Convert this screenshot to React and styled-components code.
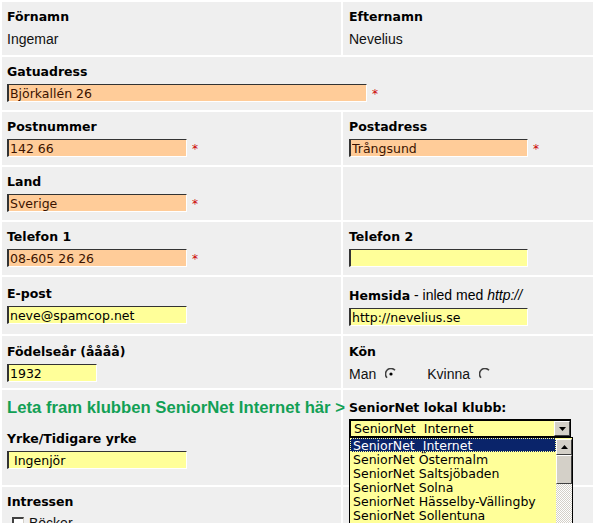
import React from 'react';
import styled, { createGlobalStyle } from 'styled-components';

const GlobalStyle = createGlobalStyle`
  body {
    margin: 0;
    background: #fff;
    font-family: "DejaVu Sans", Verdana, sans-serif;
  }
`;

const Form = styled.div`
  display: grid;
  grid-template-columns: 339px 250px;
  gap: 2px;
  padding: 2px;
  width: 595px;
  box-sizing: border-box;
  background: #fff;
`;

const Cell = styled.div`
  background: #efefef;
  height: ${({ h }) => h || 53}px;
  padding: ${({ pt }) => pt || 5}px 5px 0 ${({ right }) => (right ? 6 : 5)}px;
  box-sizing: border-box;
  grid-column: ${({ span }) => (span ? '1 / -1' : 'auto')};
  overflow: visible;
`;

const Label = styled.div`
  font: bold 12.5px "DejaVu Sans", Verdana, sans-serif;
  line-height: 20px;
  color: #000;
  white-space: nowrap;
  margin-top: ${({ mt }) => mt || 0}px;
`;

const Hint = styled.span`
  font: 14px "Liberation Sans", Arial, sans-serif;
  font-weight: normal;
  font-style: ${({ italic }) => (italic ? 'italic' : 'normal')};
`;

const Value = styled.div`
  font: 14px "Liberation Sans", Arial, sans-serif;
  line-height: 20px;
  margin-top: 2px;
  color: #111;
`;

const Field = styled.div`
  display: flex;
  align-items: center;
  margin-top: ${({ mt }) => (mt === undefined ? 2 : mt)}px;
  height: 18px;
`;

const TextBox = styled.input`
  width: ${({ w }) => w}px;
  height: 18px;
  box-sizing: border-box;
  margin: 0;
  padding: 0 0 0 1px;
  background: ${({ req }) => (req ? '#ffcc99' : '#ffff99')};
  border-style: solid;
  border-width: 1px 1px 1px 2px;
  border-color: #333 #fff #fff #333;
  font: 12.5px "DejaVu Sans", Verdana, sans-serif;
  color: ${({ req }) => (req ? '#3b1300' : '#000')};
  outline: none;
`;

const Star = styled.span`
  color: #c00;
  font: 12px "DejaVu Sans", Verdana, sans-serif;
  line-height: 18px;
  margin: 2px 0 0 5px;
`;

const Green = styled.div`
  font: bold 16.7px "Liberation Sans", Arial, sans-serif;
  line-height: 20px;
  color: #12a055;
  white-space: nowrap;
  position: relative;
  z-index: 1;
`;

const RadioRow = styled.div`
  display: flex;
  align-items: center;
  margin-top: 2px;
  height: 20px;
  font: 14px "Liberation Sans", Arial, sans-serif;
  color: #111;
`;

const RadioItem = styled.label`
  display: flex;
  align-items: center;
  gap: 9px;
  margin-right: 30px;
`;

const SelectWrap = styled.div`
  position: relative;
  width: 222px;
  margin-top: 1px;
`;

const SelectBox = styled.div`
  height: 18px;
  box-sizing: border-box;
  border: 1px solid #000;
  border-top-width: 2px;
  border-left-width: 2px;
  background: #ffff99;
  display: flex;
  align-items: center;
  justify-content: space-between;
  padding-left: 3px;
  font: 12.5px "DejaVu Sans", Verdana, sans-serif;
  white-space: pre;
  color: #000;
`;

const ArrowBtn = styled.div`
  width: 16px;
  height: 15px;
  box-sizing: border-box;
  background: #d4d0c8;
  border: 1px solid;
  border-color: #fff #404040 #404040 #fff;
  display: flex;
  align-items: center;
  justify-content: center;
`;

const DropList = styled.div`
  position: absolute;
  top: 100%;
  left: 0;
  width: 224px;
  height: 100px;
  box-sizing: border-box;
  border: 1px solid #000;
  background: #ffff99;
  display: flex;
  z-index: 2;
`;

const Options = styled.div`
  flex: 1;
`;

const Option = styled.div`
  height: 14px;
  font: 12.5px/16px "DejaVu Sans", Verdana, sans-serif;
  white-space: pre;
  padding-left: 3px;
  background: ${({ selected }) => (selected ? '#0a246a' : 'transparent')};
  color: ${({ selected }) => (selected ? '#fff' : '#000')};
  outline: ${({ selected }) => (selected ? '1px dotted #ffff99' : 'none')};
  outline-offset: -1px;
`;

const ScrollBar = styled.div`
  width: 16px;
  margin-top: 1px;
  display: flex;
  flex-direction: column;
  background: repeating-conic-gradient(#d4d0c8 0 25%, #fff 0 50%) 0 0 / 2px 2px;
`;

const ScrollBtn = styled.div`
  height: 16px;
  box-sizing: border-box;
  background: #d4d0c8;
  border: 1px solid;
  border-color: #fff #404040 #404040 #fff;
  display: flex;
  align-items: center;
  justify-content: center;
`;

const Thumb = styled.div`
  height: 29px;
  box-sizing: border-box;
  background: #d4d0c8;
  border: 1px solid;
  border-color: #fff #404040 #404040 #fff;
`;

const CheckRow = styled.div`
  display: flex;
  align-items: center;
  gap: 5px;
  margin: 3px 0 0 5px;
  font: 14px "Liberation Sans", Arial, sans-serif;
  color: #111;
`;

const CheckBox = styled.span`
  width: 12px;
  height: 12px;
  box-sizing: border-box;
  background: #fff;
  border-style: solid;
  border-width: 2px 1px 1px 2px;
  border-color: #404040 #d4d0c8 #d4d0c8 #404040;
`;

const Radio = ({ checked }) => (
  <svg width="12" height="12" viewBox="0 0 12 12">
    <path d="M10 2.2 A5 5 0 0 0 2 9.8" fill="none" stroke="#404040" strokeWidth="1.6" />
    {checked && <circle cx="6" cy="6" r="1.6" fill="#000" />}
  </svg>
);

const Arrow = ({ up }) => (
  <svg width="7" height="4" viewBox="0 0 7 4">
    <path d={up ? 'M0 4 L3.5 0 L7 4 Z' : 'M0 0 L7 0 L3.5 4 Z'} fill="#000" />
  </svg>
);

const clubs = [
  'SeniorNet  Internet',
  'SeniorNet Östermalm',
  'SeniorNet Saltsjöbaden',
  'SeniorNet Solna',
  'SeniorNet Hässelby-Vällingby',
  'SeniorNet Sollentuna',
];

const Input = ({ w, req, value }) => (
  <Field>
    <TextBox w={w} req={req} value={value} readOnly />
    {req && <Star>*</Star>}
  </Field>
);

const App = () => (
  <>
    <GlobalStyle />
    <Form>
      <Cell>
        <Label>Förnamn</Label>
        <Value>Ingemar</Value>
      </Cell>
      <Cell right>
        <Label>Efternamn</Label>
        <Value>Nevelius</Value>
      </Cell>

      <Cell span>
        <Label>Gatuadress</Label>
        <Input w={360} req value="Björkallén 26" />
      </Cell>

      <Cell>
        <Label>Postnummer</Label>
        <Input w={180} req value="142 66" />
      </Cell>
      <Cell right>
        <Label>Postadress</Label>
        <Input w={179} req value="Trångsund" />
      </Cell>

      <Cell>
        <Label>Land</Label>
        <Input w={180} req value="Sverige" />
      </Cell>
      <Cell right />

      <Cell>
        <Label>Telefon 1</Label>
        <Input w={180} req value="08-605 26 26" />
      </Cell>
      <Cell right>
        <Label>Telefon 2</Label>
        <Input w={179} value="" />
      </Cell>

      <Cell h={57} pt={7}>
        <Label>E-post</Label>
        <Input w={180} value="neve@spamcop.net" />
      </Cell>
      <Cell h={57} pt={9} right>
        <Label>
          Hemsida<Hint> - inled med </Hint>
          <Hint italic>http://</Hint>
        </Label>
        <Input w={179} value="http://nevelius.se" />
      </Cell>

      <Cell h={52} pt={6}>
        <Label>Födelseår (åååå)</Label>
        <Input w={90} value="1932" />
      </Cell>
      <Cell h={52} pt={6} right>
        <Label>Kön</Label>
        <RadioRow>
          <RadioItem>
            Man <Radio checked />
          </RadioItem>
          <RadioItem>
            Kvinna <Radio />
          </RadioItem>
        </RadioRow>
      </Cell>

      <Cell h={95} pt={8}>
        <Green>Leta fram klubben SeniorNet Internet här &gt;</Green>
        <Label mt={11}>Yrke/Tidigare yrke</Label>
        <Input w={180} value=" Ingenjör" />
      </Cell>
      <Cell h={95} pt={8} right>
        <Label>SeniorNet lokal klubb:</Label>
        <SelectWrap>
          <SelectBox>
            {clubs[0]}
            <ArrowBtn>
              <Arrow />
            </ArrowBtn>
          </SelectBox>
          <DropList>
            <Options>
              {clubs.map((c, i) => (
                <Option key={c} selected={i === 0}>
                  {c}
                </Option>
              ))}
            </Options>
            <ScrollBar>
              <ScrollBtn>
                <Arrow up />
              </ScrollBtn>
              <Thumb />
            </ScrollBar>
          </DropList>
        </SelectWrap>
      </Cell>

      <Cell h={60}>
        <Label>Intressen</Label>
        <CheckRow>
          <CheckBox />
          Böcker
        </CheckRow>
      </Cell>
      <Cell h={60} right />
    </Form>
  </>
);

export default App;
